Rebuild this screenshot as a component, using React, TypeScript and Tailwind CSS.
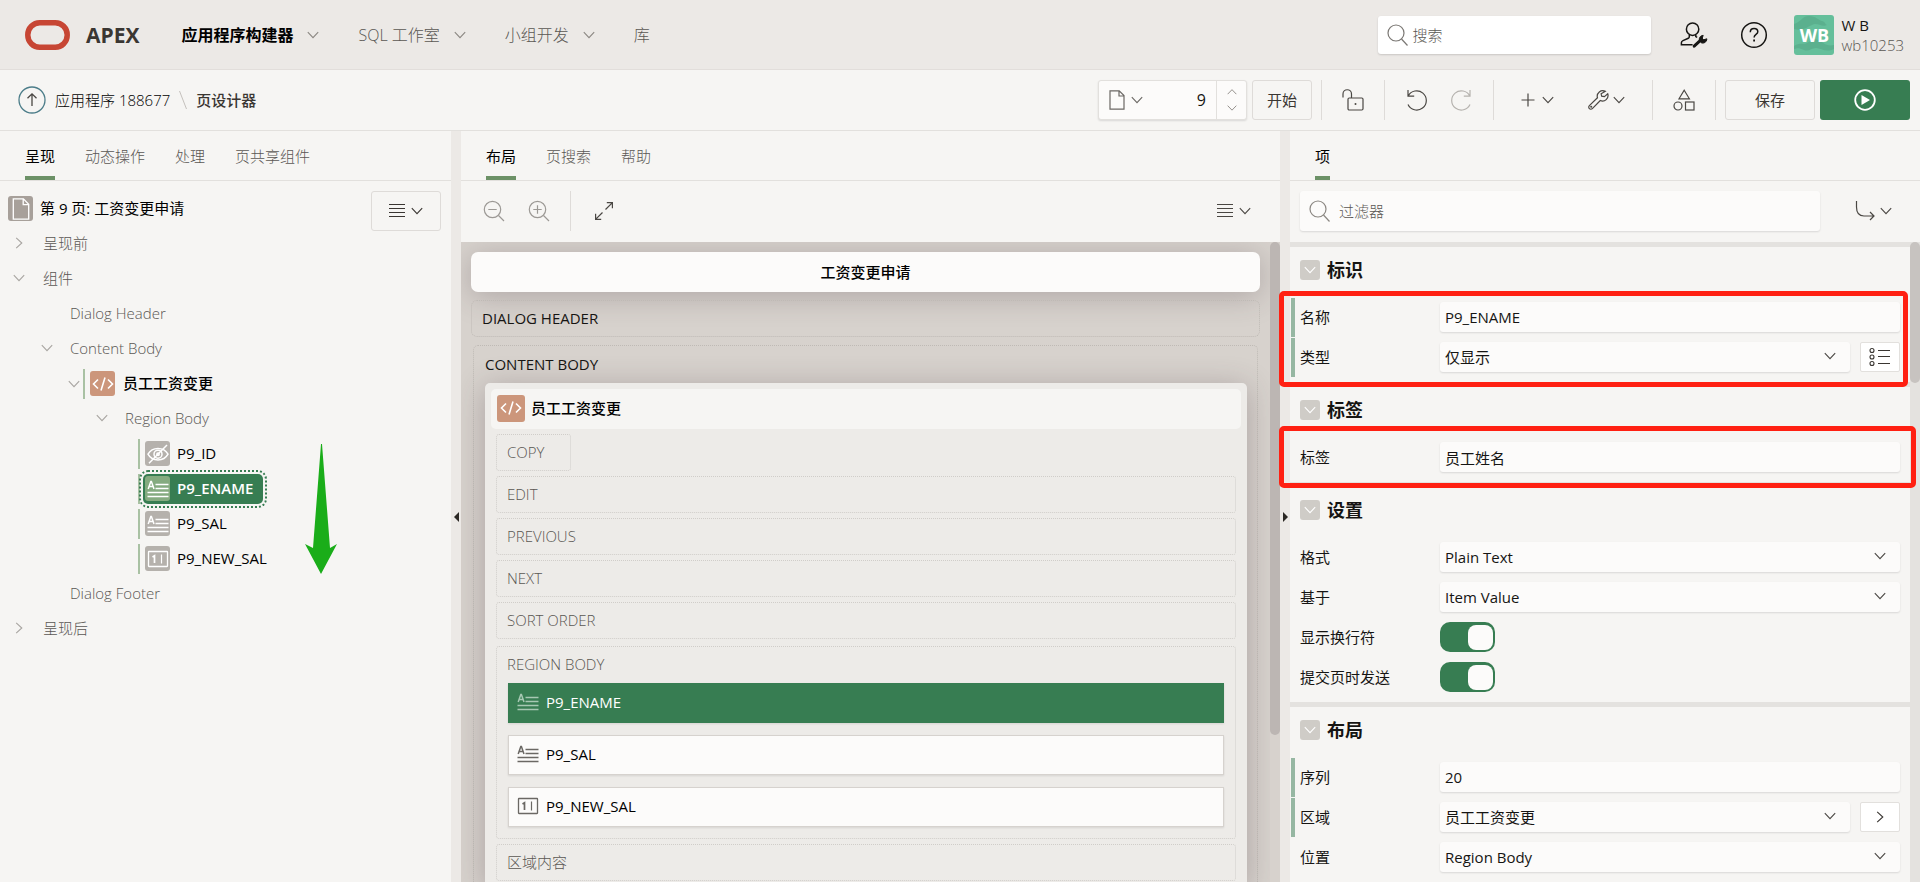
import React from "react";

type IconProps = { className?: string };

function Chevron({ className = "w-3 h-3" }: IconProps) {
  return (
    <svg className={className} viewBox="0 0 12 12" fill="none" stroke="currentColor" strokeWidth="1.1">
      <path d="M0.8 3.2 6 8.6 11.2 3.2" />
    </svg>
  );
}

function ChevronUp({ className = "w-3 h-3" }: IconProps) {
  return (
    <svg className={className} viewBox="0 0 12 12" fill="none" stroke="currentColor" strokeWidth="1.1">
      <path d="M0.8 8.6 6 3.2 11.2 8.6" />
    </svg>
  );
}

function ChevronRight({ className = "w-3 h-3" }: IconProps) {
  return (
    <svg className={className} viewBox="0 0 12 12" fill="none" stroke="currentColor" strokeWidth="1.1">
      <path d="M3.2 0.8 8.8 6 3.2 11.2" />
    </svg>
  );
}

function MenuLines({ className = "w-4 h-4" }: IconProps) {
  return (
    <svg className={className} viewBox="0 0 16 16" fill="none" stroke="currentColor" strokeWidth="1">
      <path d="M0 1.5h16M0 5.5h16M0 9.5h16M0 13.5h16" />
    </svg>
  );
}

function SearchIcon({ className = "w-6 h-6" }: IconProps) {
  return (
    <svg className={className} viewBox="0 0 24 24" fill="none" stroke="currentColor" strokeWidth="1.2">
      <circle cx="10" cy="10" r="8" />
      <path d="M15.5 16 21.5 22.5" />
    </svg>
  );
}

function PageIcon({ className = "w-5 h-5" }: IconProps) {
  return (
    <svg className={className} viewBox="0 0 20 20" fill="none" stroke="currentColor" strokeWidth="1.2">
      <path d="M3 .8h9.2L17 5.6v13.6H3zM12 1v5h5" />
    </svg>
  );
}

function CodeIcon({ className = "w-[22px] h-[22px]" }: IconProps) {
  return (
    <svg className={className} viewBox="0 0 22 22" fill="none" stroke="currentColor" strokeWidth="1.6">
      <path d="M6 6.5 1.5 11 6 15.5M16 6.5 20.5 11 16 15.5M13 4.5 9 17.5" />
    </svg>
  );
}

function DisplayOnlyIcon({ className = "w-[22px] h-[22px]" }: IconProps) {
  return (
    <svg className={className} viewBox="0 0 22 22" fill="none" stroke="currentColor">
      <path d="M1.2 11 3.8 3.6h.6L7 11M2 8.4h4.2" strokeWidth="1.5" />
      <path d="M8.5 6.5h13M8.5 10.5h13M.5 14.5h21M.5 18.5h21" strokeWidth="1.4" />
    </svg>
  );
}

function NumberFieldIcon({ className = "w-[22px] h-[22px]" }: IconProps) {
  return (
    <svg className={className} viewBox="0 0 22 22" fill="none" stroke="currentColor">
      <rect x="1.5" y="3.5" width="19" height="15" rx="0.5" strokeWidth="1.3" />
      <path d="M5.5 9 7.5 7.8V15" strokeWidth="1.7" />
      <path d="M14.5 6.5v9" strokeWidth="1.2" />
    </svg>
  );
}

function HiddenIcon({ className = "w-[22px] h-[22px]" }: IconProps) {
  return (
    <svg className={className} viewBox="0 0 22 22" fill="none" stroke="currentColor" strokeWidth="1.5">
      <path d="M1 11.2C3 7.6 6.8 5.4 11 5.4s8 2.2 10 5.8c-2 3.6-5.8 5.8-10 5.8s-8-2.2-10-5.8z" />
      <circle cx="11" cy="11.2" r="4" />
      <circle cx="11" cy="11.2" r="1.2" />
      <path d="M2 20.2 20 2" />
    </svg>
  );
}

function Divider() {
  return <span className="h-10 w-px bg-[#dedbd8]" />;
}

function Tabs({ items }: { items: string[] }) {
  return (
    <div role="tablist" className="flex h-[50px] shrink-0 gap-[30px] border-b border-[#e2e0dd] pl-[25px]">
      {items.map((t, i) => (
        <button
          key={t}
          role="tab"
          aria-selected={i === 0}
          className={
            i === 0
              ? "border-b-4 border-[#6c9166] pt-1 text-black"
              : "border-b-4 border-transparent pt-1 font-light text-[#5a5753]"
          }
        >
          {t}
        </button>
      ))}
    </div>
  );
}

function Header() {
  return (
    <header className="flex h-[70px] shrink-0 items-center border-b border-[#e2dedb] bg-[#ece9e6] pr-4 pl-[25px]">
      <svg className="h-[30px] w-[45px]" viewBox="0 0 45 30" fill="none" stroke="#c74634" strokeWidth="5.5">
        <rect x="2.8" y="2.8" width="39.4" height="24.4" rx="12" />
      </svg>
      <span className="ml-4 text-[21px] font-bold text-[#3a3632]">APEX</span>
      <nav className="ml-[42px] flex flex-1 items-center text-base font-light text-[#5a5753]">
        <a href="#builder" className="flex items-center gap-[14px] font-semibold text-black">
          应用程序构建器 <Chevron className="h-3 w-3 text-[#8b8782]" />
        </a>
        <a href="#sql" className="ml-[39px] flex items-center gap-[14px]">
          SQL 工作室 <Chevron className="h-3 w-3 text-[#8b8782]" />
        </a>
        <a href="#team" className="ml-[39px] flex items-center gap-[14px]">
          小组开发 <Chevron className="h-3 w-3 text-[#8b8782]" />
        </a>
        <a href="#gallery" className="ml-[39px]">
          库
        </a>
      </nav>
      <label className="flex h-[38px] w-[273px] items-center rounded-[3px] bg-white pl-2 shadow-[0_1px_2px_rgba(0,0,0,0.15)]">
        <SearchIcon className="h-6 w-6 text-[#7a7773]" />
        <input
          aria-label="搜索"
          placeholder="搜索"
          className="ml-[2px] min-w-0 flex-1 bg-transparent font-light outline-none placeholder:text-[#5a5753]"
        />
      </label>
      <button aria-label="管理" className="ml-[29px] text-[#161513]">
        <svg className="h-7 w-7" viewBox="0 0 28 28" fill="none" stroke="currentColor" strokeWidth="1.5">
          <circle cx="12.6" cy="8.2" r="6.2" />
          <path d="M9.3 13.6v2.2c0 .8-.4 1.2-1 1.5L3 19.6c-1.2.5-1.6 1.2-1.6 2.2v2h11.2M15.8 13.8v1.8l1.4.8" />
          <path d="M14.2 25.2 21.5 18.4" strokeWidth="3" strokeLinecap="round" />
          <path d="M20 20.4c-1.8-2.8.2-6 3.2-6l-1 2.8 1.6 1.6 3-1c.2 3.2-3.2 5.2-5.8 3.8z" fill="currentColor" strokeWidth="1" />
        </svg>
      </button>
      <button aria-label="帮助" className="ml-8 text-[#161513]">
        <svg className="h-7 w-7" viewBox="0 0 28 28" fill="none" stroke="currentColor" strokeWidth="1.5">
          <circle cx="14" cy="14" r="12.3" />
          <path d="M10.3 11.2c0-2.2 1.6-3.7 3.8-3.7s3.7 1.4 3.7 3.3c0 2.6-3.7 2.7-3.7 5.6" />
          <path d="M14.1 18.6v2" strokeWidth="1.8" />
        </svg>
      </button>
      <button className="ml-[26px] flex items-center text-left">
        <span className="relative flex h-10 w-10 items-center justify-center overflow-hidden rounded-[3px] bg-[#65bf9b]">
          <svg className="absolute inset-0 h-10 w-10" viewBox="0 0 40 40" fill="#5bb08e">
            <path d="M0 9C6 8 8 1 15 1s9 4 13 5 3 4 5 4c-4 2-8-1-12-1S10 17 0 14zM0 31c6-4 9-1 13-3s6-5 11-3 8 7 16 5v4c-8 4-13-1-18-1s-7 4-12 2-6-2-10-1z" />
          </svg>
          <span className="relative text-lg font-bold text-white">WB</span>
        </span>
        <span className="ml-[7px] text-[15px] leading-5">
          <span className="block font-medium text-[#161513]">W B</span>
          <span className="block font-light text-[#5a5753]">wb10253</span>
        </span>
      </button>
    </header>
  );
}

function Toolbar() {
  return (
    <div className="flex h-[61px] shrink-0 items-center border-b border-[#e2e0dd] pr-[10px] pl-[18px]">
      <nav className="flex flex-1 items-center">
        <a href="#up" aria-label="上一级" className="text-[#4c7d89]">
          <svg className="h-7 w-7" viewBox="0 0 28 28" fill="none" stroke="currentColor" strokeWidth="1.3">
            <circle cx="14" cy="14" r="13" />
            <path d="M14 20V8M9.5 12.3 14 7.8l4.5 4.5" stroke="#4a4743" />
          </svg>
        </a>
        <a href="#app" className="ml-[9px] font-light text-black">
          应用程序 188677
        </a>
        <svg className="ml-[9px] h-5 w-2" viewBox="0 0 8 20" stroke="#c4c0bc">
          <path d="M.5 1 7.5 19" />
        </svg>
        <span className="ml-[9px] font-medium text-[#3a3632]">页设计器</span>
      </nav>
      <div className="flex h-10 w-[149px] rounded-[3px] border border-[#e2e0dd] bg-[#fcfbfa] shadow-[0_1px_2px_rgba(0,0,0,0.12)]">
        <button aria-label="页选择器" className="flex items-center gap-1 pl-2 text-[#6b6864]">
          <PageIcon className="h-[22px] w-5" />
          <Chevron />
        </button>
        <input aria-label="页码" defaultValue="9" className="min-w-0 flex-1 bg-transparent pr-[10px] text-right text-base outline-none" />
        <span className="flex w-[30px] flex-col items-center justify-between border-l border-[#e2e0dd] py-1 text-[#8b8782]">
          <button aria-label="下一页" className="p-0.5">
            <ChevronUp className="h-[10px] w-[10px]" />
          </button>
          <button aria-label="上一页" className="p-0.5">
            <Chevron className="h-[10px] w-[10px]" />
          </button>
        </span>
      </div>
      <button className="ml-[5px] h-10 w-[60px] rounded-[3px] border border-[#dedbd8] text-[#3a3632]">开始</button>
      <div className="ml-[9px] flex items-center text-[#4a4743]">
        <Divider />
        <button aria-label="锁定" className="mx-5">
          <svg className="h-[22px] w-[22px]" viewBox="0 0 22 22" fill="none" stroke="currentColor" strokeWidth="1.2">
            <rect x="6" y="9" width="15" height="12" rx="1.2" />
            <path d="M9.5 9V5A4.2 4.2 0 0 0 1 5v3.5" />
            <circle cx="13.5" cy="15" r="1" fill="currentColor" stroke="none" />
          </svg>
        </button>
        <Divider />
        <button aria-label="撤消" className="ml-[21px]">
          <svg className="h-[22px] w-[22px]" viewBox="0 0 22 22" fill="none" stroke="currentColor" strokeWidth="1.2">
            <path d="M2 1v6.2h6.2M2.2 7A9.6 9.6 0 1 1 2 15.5" />
          </svg>
        </button>
        <button aria-label="重做" className="mr-[21px] ml-[22px] text-[#b5b2ae]">
          <svg className="h-[22px] w-[22px]" viewBox="0 0 22 22" fill="none" stroke="currentColor" strokeWidth="1.2">
            <path d="M20 1v6.2h-6.2M19.8 7A9.6 9.6 0 1 0 20 15.5" />
          </svg>
        </button>
        <Divider />
        <button aria-label="创建" className="ml-[27px] flex items-center gap-[7px]">
          <svg className="h-[14px] w-[14px]" viewBox="0 0 14 14" stroke="currentColor" strokeWidth="1.2">
            <path d="M7 0.5v13M0.5 7h13" />
          </svg>
          <Chevron />
        </button>
        <button aria-label="实用程序" className="mr-[27px] ml-[33px] flex items-center gap-1">
          <svg className="h-[22px] w-[22px]" viewBox="0 0 24 24" fill="none" stroke="currentColor" strokeWidth="1.3">
            <path d="M20 2.6a6 6 0 0 0-8.6 6.9L2.6 18.2a2.2 2.2 0 0 0 0 3.2 2.2 2.2 0 0 0 3.2 0l8.7-8.8A6 6 0 0 0 22.6 5.2L19 8.4l-3-.6-.6-2.6z" />
            <circle cx="4.6" cy="19.4" r=".5" />
          </svg>
          <Chevron />
        </button>
        <Divider />
        <button aria-label="共享组件" className="mx-5">
          <svg className="h-[22px] w-[22px]" viewBox="0 0 22 22" fill="none" stroke="currentColor" strokeWidth="1.2">
            <path d="M11.2 1.2 16.4 9.8H6z" />
            <circle cx="5" cy="17" r="4" />
            <rect x="12.5" y="13" width="8.5" height="8" />
          </svg>
        </button>
        <Divider />
      </div>
      <button className="ml-[9px] h-10 w-[90px] rounded-[3px] border border-[#dedbd8] text-[#3a3632]">保存</button>
      <button aria-label="保存并运行页" className="ml-[5px] flex h-10 w-[90px] items-center justify-center rounded-[3px] bg-[#377d52] text-white">
        <svg className="h-[22px] w-[22px]" viewBox="0 0 22 22" fill="none" stroke="currentColor" strokeWidth="1.8">
          <circle cx="11" cy="11" r="9.8" />
          <path d="M7.5 6 16 11l-8.5 5z" fill="currentColor" stroke="none" />
        </svg>
      </button>
    </div>
  );
}

function Expander({ open }: { open: boolean }) {
  return (
    <button aria-label={open ? "折叠" : "展开"} className="text-[#a8a5a1]">
      {open ? <Chevron /> : <ChevronRight />}
    </button>
  );
}

function TreeItem({ icon, label, selected = false }: { icon: React.ReactNode; label: string; selected?: boolean }) {
  return (
    <li className="flex h-[35px] items-center pl-[138px]">
      <span className="h-[30px] w-0.5 bg-[#a9c1a3]" />
      <span
        className={
          selected
            ? "ml-[3px] flex h-[30px] items-center gap-[7px] rounded-[5px] bg-[#377d52] pr-[10px] pl-0.5 font-semibold text-white outline-2 outline-offset-2 outline-dotted outline-[#377d52]"
            : "ml-[3px] flex h-[30px] items-center gap-[7px] pl-0.5 font-medium text-black"
        }
      >
        <span
          className={
            selected
              ? "flex h-[25px] w-[25px] items-center justify-center rounded-[3px] bg-[#85ab80] text-white"
              : "flex h-[25px] w-[25px] items-center justify-center rounded-[3px] bg-[#b5b1ac] text-white"
          }
        >
          {icon}
        </span>
        <span className="pb-0.5">{label}</span>
      </span>
    </li>
  );
}

function TreePanel() {
  return (
    <section className="relative flex w-[451px] shrink-0 flex-col">
      <Tabs items={["呈现", "动态操作", "处理", "页共享组件"]} />
      <div className="flex items-start justify-between pt-[10px] pr-[10px]">
        <ul className="flex-1 font-light text-[#5a5753]">
          <li className="flex h-[35px] items-center gap-[7px] pl-2 font-normal text-black">
            <span className="flex h-[25px] w-[25px] items-center justify-center rounded-[3px] bg-[#a7a09a] text-white">
              <PageIcon className="h-[22px] w-[22px]" />
            </span>
            <span className="pb-0.5">第 9 页: 工资变更申请</span>
          </li>
          <li className="flex h-[35px] items-center gap-[18px] pb-0.5 pl-[13px]">
            <Expander open={false} /> 呈现前
          </li>
          <li className="flex h-[35px] items-center gap-[18px] pb-0.5 pl-[13px]">
            <Expander open /> 组件
          </li>
          <li className="flex h-[35px] items-center pb-0.5 pl-[70px]">Dialog Header</li>
          <li className="flex h-[35px] items-center gap-[17px] pb-0.5 pl-[41px]">
            <Expander open /> Content Body
          </li>
          <li className="flex h-[35px] items-center pl-[68px] font-medium text-black">
            <Expander open />
            <span className="ml-[3px] h-[30px] w-0.5 bg-[#a9c1a3]" />
            <span className="mr-2 ml-[5px] flex h-[25px] w-[25px] items-center justify-center rounded-[3px] bg-[#cc967b] text-white">
              <CodeIcon />
            </span>
            <span className="pb-0.5">员工工资变更</span>
          </li>
          <li className="flex h-[35px] items-center gap-[17px] pb-0.5 pl-[96px]">
            <Expander open /> Region Body
          </li>
          <TreeItem icon={<HiddenIcon />} label="P9_ID" />
          <TreeItem icon={<DisplayOnlyIcon />} label="P9_ENAME" selected />
          <TreeItem icon={<DisplayOnlyIcon />} label="P9_SAL" />
          <TreeItem icon={<NumberFieldIcon />} label="P9_NEW_SAL" />
          <li className="flex h-[35px] items-center pb-0.5 pl-[70px]">Dialog Footer</li>
          <li className="flex h-[35px] items-center gap-[18px] pb-0.5 pl-[13px]">
            <Expander open={false} /> 呈现后
          </li>
        </ul>
        <button aria-label="菜单" className="flex h-10 w-[70px] items-center justify-center gap-[6px] rounded-[3px] border border-[#dedbd8] text-[#3a3632]">
          <MenuLines />
          <Chevron />
        </button>
      </div>
      <svg className="absolute top-[313px] left-[305px] h-[130px] w-8" viewBox="0 0 32 130" fill="#1aad19">
        <path d="M16 0h1L25 104l7-4-16 30L0 100l8 4z" />
      </svg>
    </section>
  );
}

function Splitter({ right = false }: { right?: boolean }) {
  return (
    <div className="flex w-[10px] shrink-0 items-center justify-center bg-[#ece9e6]">
      <svg className="mt-[21px] h-[10px] w-[5px]" viewBox="0 0 5 10" fill="#2b2824">
        <path d={right ? "M0 0 5 5 0 10z" : "M5 0 0 5l5 5z"} />
      </svg>
    </div>
  );
}

function Slot({ label, className = "w-full" }: { label: string; className?: string }) {
  return (
    <div className={className}>
      <div className="flex h-[37px] items-center rounded-[3px] border border-dotted border-[#d0cdc9] pb-0.5 pl-[10px] font-light text-[#5a5753]">
        {label}
      </div>
    </div>
  );
}

function LayoutItem({ icon, label, selected = false }: { icon: React.ReactNode; label: string; selected?: boolean }) {
  return (
    <div
      className={
        selected
          ? "flex h-10 items-center bg-[#377d52] pb-0.5 pl-[9px] font-medium text-white shadow-[0_1px_2px_rgba(0,0,0,0.1)]"
          : "flex h-10 items-center border border-[#d6d2ce] bg-[#fcfbfa] pb-0.5 pl-2 text-black shadow-[0_1px_2px_rgba(0,0,0,0.1)]"
      }
    >
      <span className={selected ? "mr-[7px] text-[#a7c8b3]" : "mr-[7px] text-[#6b6864]"}>{icon}</span>
      {label}
    </div>
  );
}

function LayoutPanel() {
  return (
    <section className="flex min-w-0 flex-1 flex-col">
      <Tabs items={["布局", "页搜索", "帮助"]} />
      <div className="flex h-[61px] shrink-0 items-center pr-[29px] pb-0.5 pl-[22px] text-[#4a4743]">
        <button aria-label="缩小" className="text-[#9c9995]">
          <svg className="h-[22px] w-[22px]" viewBox="0 0 22 22" fill="none" stroke="currentColor" strokeWidth="1.2">
            <circle cx="9.5" cy="9.5" r="8.2" />
            <path d="M15.5 15.5 21 21M5.3 9.5h8.4" />
          </svg>
        </button>
        <button aria-label="放大" className="ml-[23px] text-[#9c9995]">
          <svg className="h-[22px] w-[22px]" viewBox="0 0 22 22" fill="none" stroke="currentColor" strokeWidth="1.2">
            <circle cx="9.5" cy="9.5" r="8.2" />
            <path d="M15.5 15.5 21 21M5.3 9.5h8.4M9.5 5.3v8.4" />
          </svg>
        </button>
        <span className="ml-5 flex">
          <Divider />
        </span>
        <button aria-label="展开" className="ml-[23px]">
          <svg className="h-5 w-5" viewBox="0 0 20 20" fill="none" stroke="currentColor" strokeWidth="1.2">
            <path d="M11.5 8.5 18.2 1.8M12.8 1.6h5.6v5.6M8.5 11.5 1.8 18.2M1.6 12.8v5.6h5.6" />
          </svg>
        </button>
        <button aria-label="菜单" className="ml-auto flex items-center gap-[6px]">
          <MenuLines />
          <Chevron />
        </button>
      </div>
      <div className="flex min-h-0 flex-1 bg-[#d7d2cd]">
        <div className="min-w-0 flex-1 overflow-hidden px-[10px] pt-[10px]">
          <div className="flex h-10 items-center justify-center rounded-[7px] bg-[#fcfbfa] font-medium text-black shadow-[0_4px_30px_rgba(70,50,60,0.28)]">
            工资变更申请
          </div>
          <div className="mt-2 flex h-[37px] items-center rounded-[6px] border border-dotted border-[#bfbab5] pb-0.5 pl-[10px] text-[#161513]">
            DIALOG HEADER
          </div>
          <div className="mx-0.5 mt-2 rounded-t-[5px] border border-b-0 border-dotted border-[#bfbab5] pr-[10px] pl-[11px]">
            <div className="flex h-[37px] items-center pb-0.5 text-[#161513]">
              <span>CONTENT BODY</span>
            </div>
            <div className="rounded-[5px] bg-[#edebe8] p-[6px] shadow-[0_4px_30px_rgba(70,50,60,0.3)]">
              <div className="flex h-10 items-center gap-[6px] rounded-[5px] bg-[#f6f5f3] pb-0.5 pl-[6px] font-medium text-black">
                <span className="flex h-[27px] w-7 items-center justify-center rounded-[3px] bg-[#cc967b] text-white">
                  <CodeIcon />
                </span>
                员工工资变更
              </div>
              <div className="flex flex-col gap-[5px] px-[5px] pt-[5px]">
                <Slot label="COPY" className="w-[75px]" />
                <Slot label="EDIT" />
                <Slot label="PREVIOUS" />
                <Slot label="NEXT" />
                <Slot label="SORT ORDER" className="w-full pb-0.5" />
                <div className="rounded-[3px] border border-dotted border-[#d0cdc9] pb-[11px]">
                  <div className="flex h-9 items-center pb-0.5 pl-[10px] font-light text-[#5a5753]">REGION BODY</div>
                  <div className="flex flex-col gap-3 px-[11px]">
                    <LayoutItem icon={<DisplayOnlyIcon />} label="P9_ENAME" selected />
                    <LayoutItem icon={<DisplayOnlyIcon />} label="P9_SAL" />
                    <LayoutItem icon={<NumberFieldIcon />} label="P9_NEW_SAL" />
                  </div>
                </div>
                <Slot label="区域内容" />
              </div>
            </div>
          </div>
        </div>
        <div className="w-[10px] shrink-0 bg-[#d7d2cd]">
          <div className="h-[77%] rounded-full bg-[#bcb6b3]" />
        </div>
      </div>
    </section>
  );
}

function Group({ title, children }: { title: string; children: React.ReactNode }) {
  return (
    <section className="border-t-[5px] border-[#e4e2df] pb-[5px]">
      <h2 className="flex h-[50px] items-center gap-[7px] pb-1 pl-[10px] text-lg font-bold text-[#161513]">
        <button aria-label={title} className="flex h-5 w-5 items-center justify-center rounded-[3px] bg-[#cfccc7] text-white">
          <Chevron />
        </button>
        {title}
      </h2>
      {children}
    </section>
  );
}

function Row({ label, id, required = false, children }: { label: string; id: string; required?: boolean; children: React.ReactNode }) {
  return (
    <div className="flex h-10 pr-[10px] pl-px">
      <span className={required ? "mt-px mr-[5px] w-1 bg-[#96b7a2]" : "mr-[5px] w-1"} />
      <label htmlFor={id} className="flex w-[140px] shrink-0 items-center">
        {label}
      </label>
      <div className="flex min-w-0 flex-1 items-center gap-[10px]">{children}</div>
    </div>
  );
}

function TextField({ id, value }: { id: string; value: string }) {
  return (
    <input
      id={id}
      defaultValue={value}
      className="h-[30px] min-w-0 flex-1 rounded-[3px] bg-[#fcfbfa] px-[5px] shadow-[0_1px_2px_rgba(0,0,0,0.12)] outline-none"
    />
  );
}

function SelectField({ id, value }: { id: string; value: string }) {
  return (
    <span className="relative min-w-0 flex-1">
      <select
        id={id}
        className="block h-[30px] w-full appearance-none rounded-[3px] bg-[#fcfbfa] px-[5px] shadow-[0_1px_2px_rgba(0,0,0,0.12)] outline-none"
      >
        <option>{value}</option>
      </select>
      <Chevron className="pointer-events-none absolute top-2 right-[14px] h-3 w-3 text-[#4a4743]" />
    </span>
  );
}

function Toggle({ id }: { id: string }) {
  return (
    <span className="relative h-[30px] w-[55px]">
      <input
        id={id}
        type="checkbox"
        role="switch"
        defaultChecked
        className="block h-[30px] w-[55px] appearance-none rounded-[10px] bg-[#a7a09a] checked:bg-[#377d52]"
      />
      <span className="pointer-events-none absolute top-[3px] right-0.5 h-[25px] w-[25px] rounded-[8px] bg-[#fcfbfa]" />
    </span>
  );
}

function PropertyPanel() {
  return (
    <section className="relative flex w-[630px] shrink-0 flex-col">
      <Tabs items={["项"]} />
      <div className="flex h-[61px] shrink-0 items-center pr-7 pb-0.5 pl-[10px]">
        <label className="flex h-10 flex-1 items-center rounded-[3px] bg-[#fcfbfa] pl-2 shadow-[0_1px_2px_rgba(0,0,0,0.12)]">
          <SearchIcon className="h-6 w-6 text-[#8b8782]" />
          <input
            aria-label="过滤器"
            placeholder="过滤器"
            className="ml-[7px] min-w-0 flex-1 bg-transparent font-light outline-none placeholder:text-[#5a5753]"
          />
        </label>
        <button aria-label="转到组" className="ml-[35px] flex items-center gap-[5px] text-[#4a4743]">
          <svg className="h-5 w-5" viewBox="0 0 20 20" fill="none" stroke="currentColor" strokeWidth="1.2">
            <path d="M1.5 0v6c0 6 2.5 9 7.5 9h10M15 11l4 4-4 4" />
          </svg>
          <Chevron />
        </button>
      </div>
      <div className="flex min-h-0 flex-1">
        <div className="min-w-0 flex-1 overflow-hidden">
          <Group title="标识">
            <Row label="名称" id="name" required>
              <TextField id="name" value="P9_ENAME" />
            </Row>
            <Row label="类型" id="type" required>
              <SelectField id="type" value="仅显示" />
              <button aria-label="选择类型" className="flex h-[30px] w-10 items-center justify-center rounded-[2px] border border-[#e2e0dd] bg-white text-[#3a3632]">
                <svg className="h-5 w-[22px]" viewBox="0 0 22 20" fill="none" stroke="currentColor" strokeWidth="1.1">
                  <circle cx="3" cy="3.5" r="2" />
                  <circle cx="3" cy="10" r="2" />
                  <circle cx="3" cy="16.5" r="2" />
                  <path d="M9 3.5h12M9 9.5h12M9 16.5h12" />
                </svg>
              </button>
            </Row>
          </Group>
          <Group title="标签">
            <Row label="标签" id="label">
              <TextField id="label" value="员工姓名" />
            </Row>
          </Group>
          <Group title="设置">
            <Row label="格式" id="format">
              <SelectField id="format" value="Plain Text" />
            </Row>
            <Row label="基于" id="based-on">
              <SelectField id="based-on" value="Item Value" />
            </Row>
            <Row label="显示换行符" id="line-breaks">
              <Toggle id="line-breaks" />
            </Row>
            <Row label="提交页时发送" id="send-on-submit">
              <Toggle id="send-on-submit" />
            </Row>
          </Group>
          <Group title="布局">
            <Row label="序列" id="sequence" required>
              <TextField id="sequence" value="20" />
            </Row>
            <Row label="区域" id="region" required>
              <SelectField id="region" value="员工工资变更" />
              <button aria-label="转到区域" className="flex h-[30px] w-10 items-center justify-center rounded-[2px] border border-[#e2e0dd] bg-white text-[#3a3632]">
                <ChevronRight />
              </button>
            </Row>
            <Row label="位置" id="position">
              <SelectField id="position" value="Region Body" />
            </Row>
          </Group>
        </div>
        <div className="w-[10px] shrink-0 bg-[#e4e2df]">
          <div className="h-[22%] rounded-full bg-[#c7c3c0]" />
        </div>
      </div>
      <div className="pointer-events-none absolute top-[160px] right-3 -left-[11px] h-24 rounded-[5px] border-[5px] border-[#ff2012]" />
      <div className="pointer-events-none absolute top-[295px] right-1 -left-[11px] h-[62px] rounded-[5px] border-[5px] border-[#ff2012]" />
    </section>
  );
}

export default function App() {
  return (
    <div className="flex h-screen flex-col overflow-hidden bg-[#f6f5f3] font-['Open_Sans','Noto_Sans_CJK_SC',sans-serif] text-[15px] leading-5 text-[#161513]">
      <Header />
      <Toolbar />
      <main className="flex min-h-0 flex-1">
        <TreePanel />
        <Splitter />
        <LayoutPanel />
        <Splitter right />
        <PropertyPanel />
      </main>
    </div>
  );
}
